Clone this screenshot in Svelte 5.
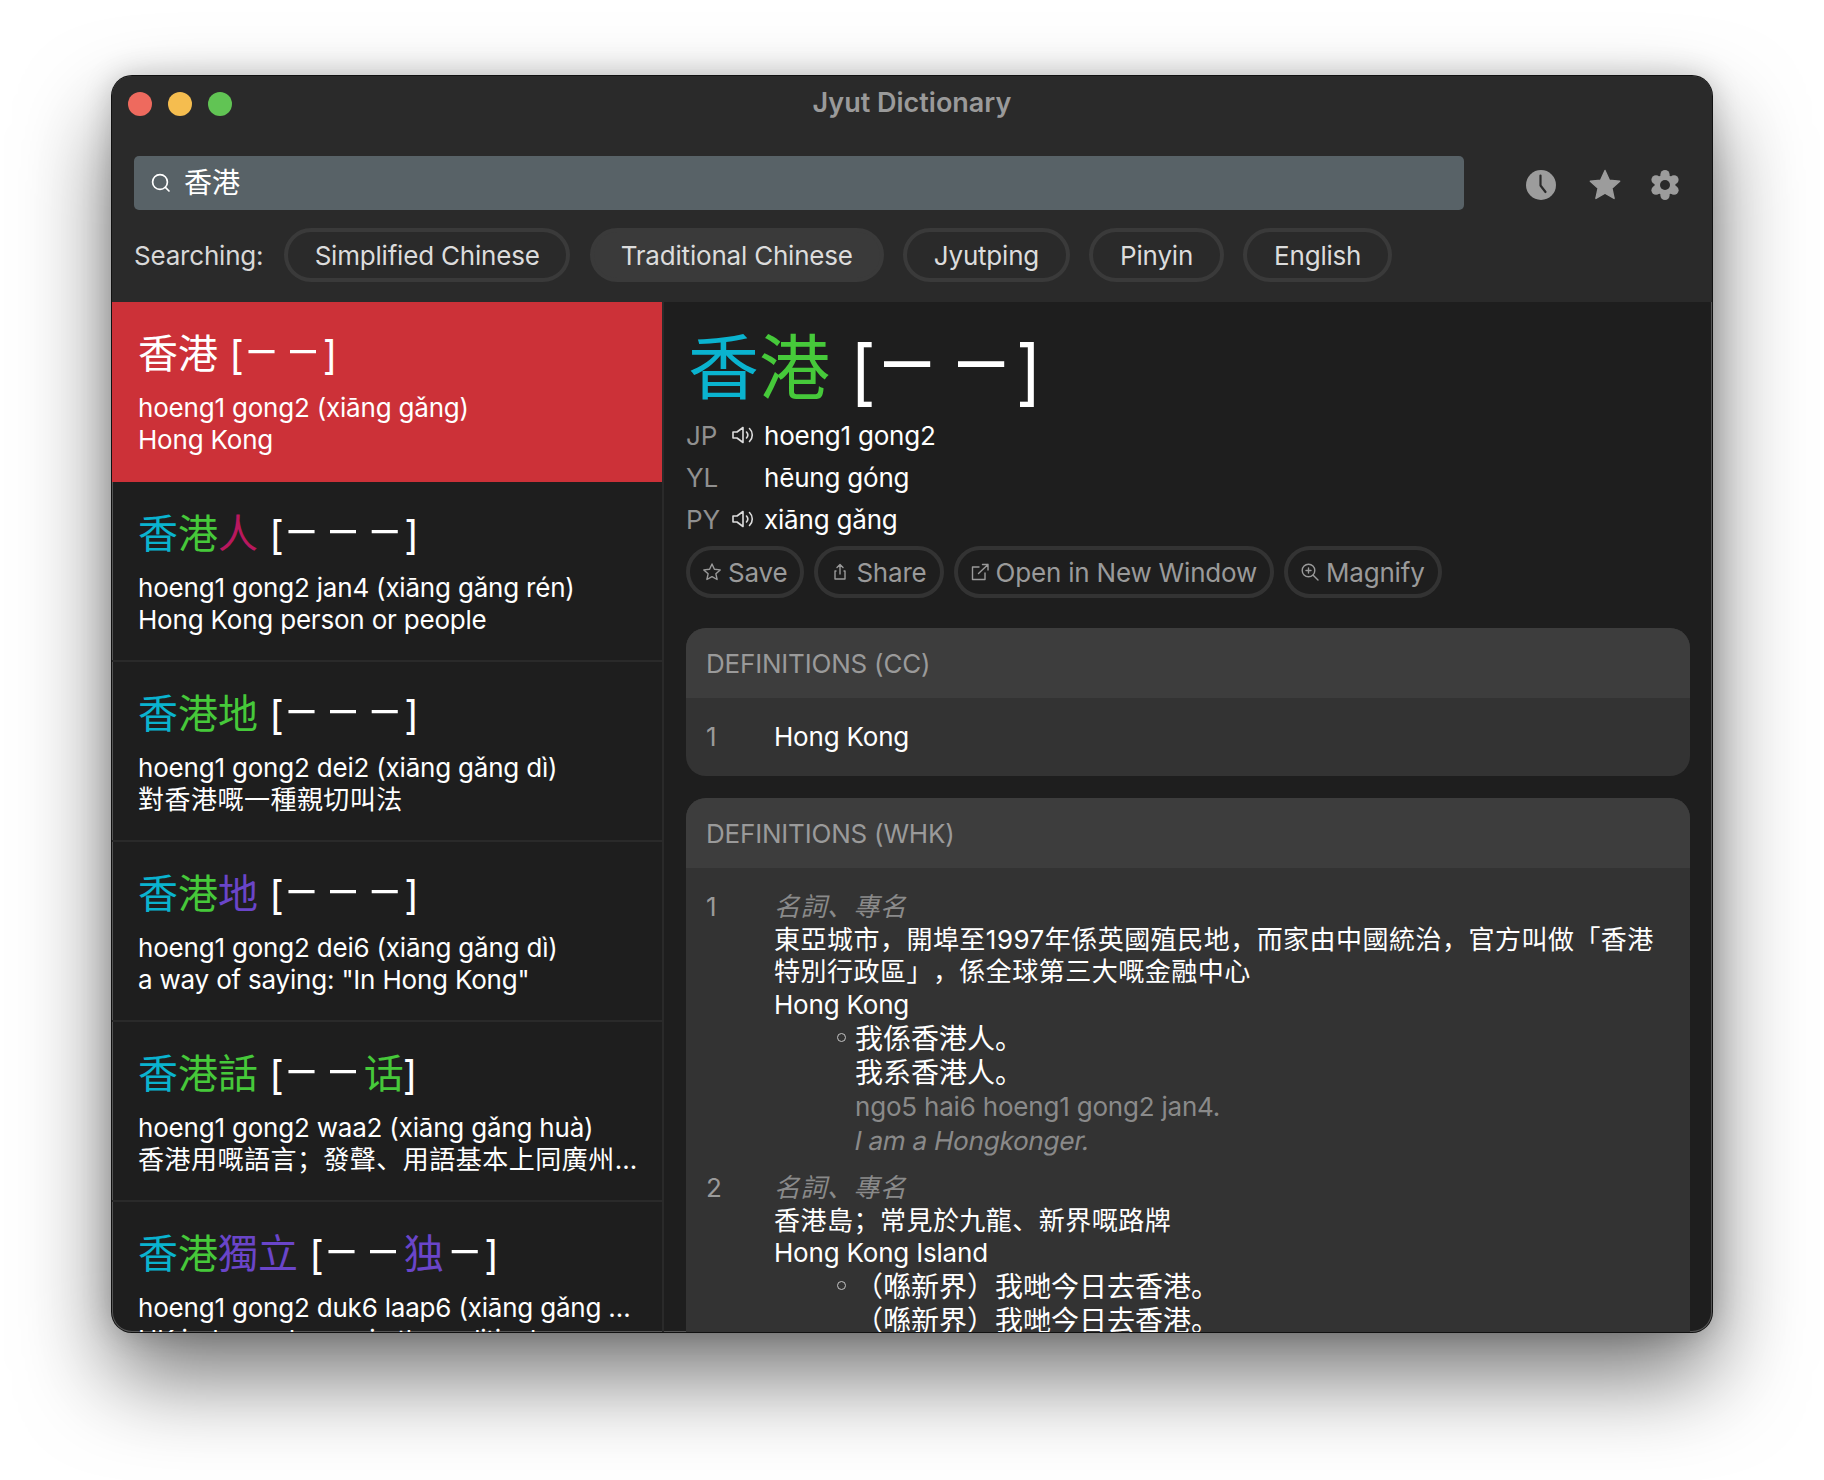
<script lang="ts">
  type Seg = { t: string; c?: string };
  type Item = { chars: Seg[]; alt: Seg[]; pron: string; gloss: string; zh?: boolean };

  const cyan = '#0ab3cf';
  const green = '#46c93a';
  const pink = '#b8185e';
  const purple = '#6a45c9';
  const same: Seg = { t: '–' };

  const items: Item[] = [
    { chars: [{ t: '香' }, { t: '港' }], alt: [same, same], pron: 'hoeng1 gong2 (xiāng gǎng)', gloss: 'Hong Kong' },
    { chars: [{ t: '香', c: cyan }, { t: '港', c: green }, { t: '人', c: pink }], alt: [same, same, same], pron: 'hoeng1 gong2 jan4 (xiāng gǎng rén)', gloss: 'Hong Kong person or people' },
    { chars: [{ t: '香', c: cyan }, { t: '港', c: green }, { t: '地', c: green }], alt: [same, same, same], pron: 'hoeng1 gong2 dei2 (xiāng gǎng dì)', gloss: '對香港嘅一種親切叫法', zh: true },
    { chars: [{ t: '香', c: cyan }, { t: '港', c: green }, { t: '地', c: purple }], alt: [same, same, same], pron: 'hoeng1 gong2 dei6 (xiāng gǎng dì)', gloss: 'a way of saying: "In Hong Kong"' },
    { chars: [{ t: '香', c: cyan }, { t: '港', c: green }, { t: '話', c: green }], alt: [same, same, { t: '话', c: green }], pron: 'hoeng1 gong2 waa2 (xiāng gǎng huà)', gloss: '香港用嘅語言；發聲、用語基本上同廣州話一樣', zh: true },
    { chars: [{ t: '香', c: cyan }, { t: '港', c: green }, { t: '獨', c: purple }, { t: '立', c: purple }], alt: [same, same, { t: '独', c: purple }, same], pron: 'hoeng1 gong2 duk6 laap6 (xiāng gǎng dú lì)', gloss: 'HK independence, in the political sense' }
  ];

  const chips = ['Simplified Chinese', 'Traditional Chinese', 'Jyutping', 'Pinyin', 'English'];
</script>

{#snippet speaker()}
  <svg class="spk" width="22" height="18" viewBox="0 0 22 18" fill="none" stroke="#dcdcdc" stroke-width="1.6" stroke-linejoin="round" stroke-linecap="round">
    <path d="M1 6V12H5L11 16.500V1.500L5 6Z" />
    <path d="M14.500 6a4.500 4.500 0 0 1 0 6" />
    <path d="M17.500 2.500a9 9 0 0 1 0 13" />
  </svg>
{/snippet}

{#snippet altForm(segs: Seg[])}
  <span class="alt"><span class="br open">[</span>{#each segs as s}{#if s.t === '–'}<span class="dash">–</span>{:else}<span style:color={s.c}>{s.t}</span>{/if}{/each}<span class="br close">]</span></span>
{/snippet}

<div class="page">
  <div class="window">
    <header class="top">
      <div class="titlebar">
        <div class="lights">
          <span class="light red"></span>
          <span class="light yellow"></span>
          <span class="light lime"></span>
        </div>
        <div class="title">Jyut Dictionary</div>
      </div>

      <div class="search-row">
        <div class="search">
          <svg width="22" height="22" viewBox="0 0 22 22" fill="none" stroke="#fff" stroke-width="1.7" stroke-linecap="round">
            <circle cx="10" cy="10" r="7.400" />
            <line x1="15.400" y1="15.400" x2="19" y2="19" />
          </svg>
          <span class="query">香港</span>
        </div>
        <div class="tools">
          <svg width="32" height="32" viewBox="0 0 32 32">
            <circle cx="16" cy="16" r="15" fill="#9c9c9c" />
            <path d="M15.500 6.500V16.500L20.500 23" fill="none" stroke="#2a2a2a" stroke-width="2.200" stroke-linecap="round" stroke-linejoin="round" />
          </svg>
          <svg width="32" height="32" viewBox="0 0 32 32">
            <path d="M16 1.500l4.300 9.600 10.400 1.100-7.800 7 2.200 10.300-9.100-5.300-9.100 5.300 2.200-10.300-7.800-7 10.400-1.100z" fill="#9c9c9c" stroke="#9c9c9c" stroke-width="1.400" stroke-linejoin="round" />
          </svg>
          <svg class="gear" width="32" height="32" viewBox="0 0 32 32">
            <g fill="#9c9c9c">
              <circle cx="16" cy="5.600" r="4.600" />
              <circle cx="16" cy="26.400" r="4.600" />
              <circle cx="7" cy="10.800" r="4.600" />
              <circle cx="25" cy="10.800" r="4.600" />
              <circle cx="7" cy="21.200" r="4.600" />
              <circle cx="25" cy="21.200" r="4.600" />
              <circle cx="16" cy="16" r="10.500" />
            </g>
            <circle cx="16" cy="16" r="5" fill="#2a2a2a" />
          </svg>
        </div>
      </div>

      <div class="chip-row">
        <span class="searching">Searching:</span>
        {#each chips as chip}
          <span class="chip" class:on={chip === 'Traditional Chinese'}>{chip}</span>
        {/each}
      </div>
    </header>

    <div class="body">
      <aside class="list">
        {#each items as item, i}
          <div class="item" class:selected={i === 0}>
            <div class="item-head">
              {#each item.chars as s}<span style:color={s.c}>{s.t}</span>{/each}
              {@render altForm(item.alt)}
            </div>
            <div class="item-line">{item.pron}</div>
            <div class="item-line" class:zh={item.zh} class:tight={i === 4}>{item.gloss}</div>
          </div>
        {/each}
      </aside>

      <main class="detail">
        <h1 class="big">
          <span style:color={cyan}>香</span><span style:color={green}>港</span>
          {@render altForm([same, same])}
        </h1>

        <div class="prons">
          <span class="tag">JP</span>
          {@render speaker()}
          <span class="val">hoeng1 gong2</span>

          <span class="tag">YL</span>
          <span></span>
          <span class="val">hēung góng</span>

          <span class="tag">PY</span>
          {@render speaker()}
          <span class="val">xiāng gǎng</span>
        </div>

        <div class="actions">
          <button class="act">
            <svg width="20" height="20" viewBox="0 0 20 20" fill="none" stroke="#9a9a9a" stroke-width="1.400" stroke-linejoin="round">
              <path d="M10 2l2.400 5.300 5.800.6-4.300 3.900 1.200 5.700-5.100-2.900-5.100 2.900 1.200-5.700L1.800 7.900l5.800-.6z" />
            </svg>
            Save
          </button>
          <button class="act">
            <svg width="20" height="20" viewBox="0 0 20 20" fill="none" stroke="#9a9a9a" stroke-width="1.400" stroke-linecap="round" stroke-linejoin="round">
              <path d="M10 12V3M7 5.500L10 2.500l3 3" />
              <path d="M6 9H5V17H15V9H14" />
            </svg>
            Share
          </button>
          <button class="act">
            <svg width="20" height="20" viewBox="0 0 20 20" fill="none" stroke="#9a9a9a" stroke-width="1.400" stroke-linecap="round" stroke-linejoin="round">
              <path d="M9 5H2.500V17.500H15V11" />
              <path d="M8.500 11.500L18 2.500M12.500 2.500H18V8" />
            </svg>
            Open in New Window
          </button>
          <button class="act">
            <svg width="20" height="20" viewBox="0 0 20 20" fill="none" stroke="#9a9a9a" stroke-width="1.400" stroke-linecap="round">
              <circle cx="8.500" cy="8.500" r="6.300" />
              <path d="M13.200 13.200L18 18M8.500 6V11M6 8.500H11" />
            </svg>
            Magnify
          </button>
        </div>

        <section class="card first">
          <div class="card-head">DEFINITIONS (CC)</div>
          <div class="card-body simple">
            <span class="num">1</span>
            <div class="def">Hong Kong</div>
          </div>
        </section>

        <section class="card">
          <div class="card-head">DEFINITIONS (WHK)</div>
          <div class="card-body">
            <div class="entry">
              <span class="num">1</span>
              <div class="def">
                <div class="pos zh">名詞、專名</div>
                <div class="zh">東亞城市，開埠至1997年係英國殖民地，而家由中國統治，官方叫做「香港特別行政區」，係全球第三大嘅金融中心</div>
                <div>Hong Kong</div>
                <ul class="examples">
                  <li>
                    <div class="ex">我係香港人。</div>
                    <div class="ex">我系香港人。</div>
                    <div class="roman">ngo5 hai6 hoeng1 gong2 jan4.</div>
                    <div class="roman"><span class="it">I am a Hongkonger.</span></div>
                  </li>
                </ul>
              </div>
            </div>
            <div class="entry">
              <span class="num">2</span>
              <div class="def">
                <div class="pos zh">名詞、專名</div>
                <div class="zh">香港島；常見於九龍、新界嘅路牌</div>
                <div>Hong Kong Island</div>
                <ul class="examples">
                  <li>
                    <div class="ex">（喺新界）我哋今日去香港。</div>
                    <div class="ex">（喺新界）我哋今日去香港。</div>
                  </li>
                </ul>
              </div>
            </div>
          </div>
        </section>
      </main>
    </div>
  </div>
</div>

<style>
  :global(body) {
    margin: 0;
    background: #fff;
  }

  .page {
    height: 1480px;
    box-sizing: border-box;
    padding: 76px 112px 0;
    font-family: Inter, "Noto Sans CJK SC", sans-serif;
    font-size: 26px;
    letter-spacing: -0.2px;
    color: #fff;
  }

  .window {
    height: 1256px;
    border-radius: 20px;
    overflow: hidden;
    display: flex;
    flex-direction: column;
    background: #1e1e1e;
    box-shadow: 0 0 0 1px #111, inset 0 0 0 1px #555, 0 44px 90px rgba(0, 0, 0, 0.55), 0 0 30px rgba(0, 0, 0, 0.2);
  }

  .zh {
    letter-spacing: 0.48px;
    text-spacing-trim: space-all;
  }

  /* Top bar */
  .top {
    background: #2a2a2a;
    height: 226px;
    flex-shrink: 0;
    box-sizing: border-box;
    padding: 0 22px;
  }

  .titlebar {
    height: 56px;
    position: relative;
    display: flex;
    align-items: center;
    justify-content: center;
    margin: 0 -22px;
  }

  .lights {
    position: absolute;
    left: 16px;
    top: 16px;
    display: flex;
    gap: 16px;
  }

  .light {
    width: 24px;
    height: 24px;
    border-radius: 50%;
  }

  .red { background: #ee6a5e; }
  .yellow { background: #f5bd4f; }
  .lime { background: #61c454; }

  .title {
    font-size: 27px;
    font-weight: 600;
    letter-spacing: 0;
    color: #9a9a9a;
    margin-top: -4px;
  }

  .search-row {
    display: flex;
    align-items: flex-start;
    margin-top: 24px;
  }

  .search {
    width: 1330px;
    height: 54px;
    background: #586267;
    border-radius: 5px;
    display: flex;
    align-items: center;
    gap: 12px;
    padding: 0 16px;
    box-sizing: border-box;
  }

  .query {
    font-size: 28px;
    letter-spacing: 0;
    margin-top: -4px;
  }

  .tools {
    display: flex;
    align-items: center;
    margin: 13px 0 0 61px;
    gap: 32px;
  }

  .gear {
    margin-left: -4px;
  }

  .chip-row {
    display: flex;
    align-items: center;
    margin-top: 18px;
    gap: 19.500px;
  }

  .searching {
    color: #d8d8d8;
    margin-right: 1px;
  }

  .chip {
    height: 54px;
    box-sizing: border-box;
    border: 4px solid #3a3a3a;
    border-radius: 27px;
    padding: 0 26.750px;
    display: flex;
    align-items: center;
    color: #dcdcdc;
  }

  .chip.on {
    background: #3a3a3a;
  }

  /* Result list */
  .body {
    flex: 1;
    display: flex;
    min-height: 0;
  }

  .list {
    width: 550px;
    flex-shrink: 0;
    border-right: 2px solid #2a2a2a;
    overflow: hidden;
  }

  .item {
    height: 180px;
    box-sizing: border-box;
    padding: 28px 26px 0 26px;
    border-bottom: 2px solid #2a2a2a;
  }

  .item.selected {
    background: #cc3138;
    border-bottom-color: #cc3138;
  }

  .item-head {
    height: 48px;
    font-size: 40px;
    line-height: 48px;
    letter-spacing: 0;
    margin-bottom: 14px;
  }

  .alt {
    color: #fff;
  }

  .br {
    vertical-align: -0.05em;
  }

  .open {
    margin-right: -0.08em;
  }

  .close {
    margin-left: -0.03em;
  }

  .dash {
    display: inline-block;
    width: 0.8em;
    font-size: 1.3em;
    font-weight: 300;
    line-height: 0;
    text-align: center;
  }

  .item-line {
    line-height: 32px;
    white-space: nowrap;
    overflow: hidden;
    text-overflow: ellipsis;
  }

  .item-line.tight {
    margin-right: -12px;
  }

  /* Detail */
  .detail {
    flex: 1;
    min-width: 0;
    padding: 20px 22px 0 22px;
    overflow: hidden;
  }

  .big {
    height: 90px;
    margin: 0;
    font-size: 71px;
    line-height: 90px;
    font-weight: 400;
    letter-spacing: 0;
    padding-left: 2px;
  }

  .prons {
    display: grid;
    grid-template-columns: 46px 32px 1fr;
    grid-auto-rows: 42px;
    align-items: center;
    margin-top: 2px;
  }

  .tag {
    color: #909090;
  }

  .actions {
    display: flex;
    gap: 10px;
    margin-top: 6px;
  }

  .act {
    height: 52px;
    box-sizing: border-box;
    border: 4px solid #333;
    border-radius: 26px;
    background: none;
    color: #9a9a9a;
    font: inherit;
    letter-spacing: inherit;
    padding: 0 13px 0 12px;
    display: flex;
    align-items: center;
    gap: 6px;
  }

  .card {
    background: #333;
    border-radius: 20px;
    overflow: hidden;
    margin-top: 22px;
  }

  .card.first {
    margin-top: 30px;
  }

  .card-head {
    height: 70px;
    display: flex;
    align-items: center;
    background: #3d3d3d;
    color: #9a9a9a;
    padding: 0 20px;
  }

  .card-body {
    padding: 23px 20px 0;
  }

  .card-body.simple {
    display: flex;
    padding: 21px 20px 21px;
    line-height: 36px;
  }

  .entry {
    display: flex;
    line-height: 32.700px;
    margin-bottom: 14px;
  }

  .num {
    width: 68px;
    flex-shrink: 0;
    color: #9a9a9a;
  }

  .def {
    flex: 1;
    min-width: 0;
  }

  .pos {
    color: #8a8a8a;
    font-style: italic;
  }

  .examples {
    margin: 0;
    padding: 0 0 0 81px;
    list-style: none;
  }

  .examples li {
    position: relative;
    line-height: 34px;
  }

  .examples li::before {
    content: "";
    position: absolute;
    left: -18px;
    top: 11px;
    width: 7px;
    height: 7px;
    border: 1.500px solid #c4c4c4;
    border-radius: 50%;
  }

  .ex {
    font-size: 28px;
    letter-spacing: 0;
    text-spacing-trim: space-all;
  }

  .roman {
    color: #8a8a8a;
  }

  .it {
    display: inline-block;
    transform: skewX(-11deg);
  }
</style>
